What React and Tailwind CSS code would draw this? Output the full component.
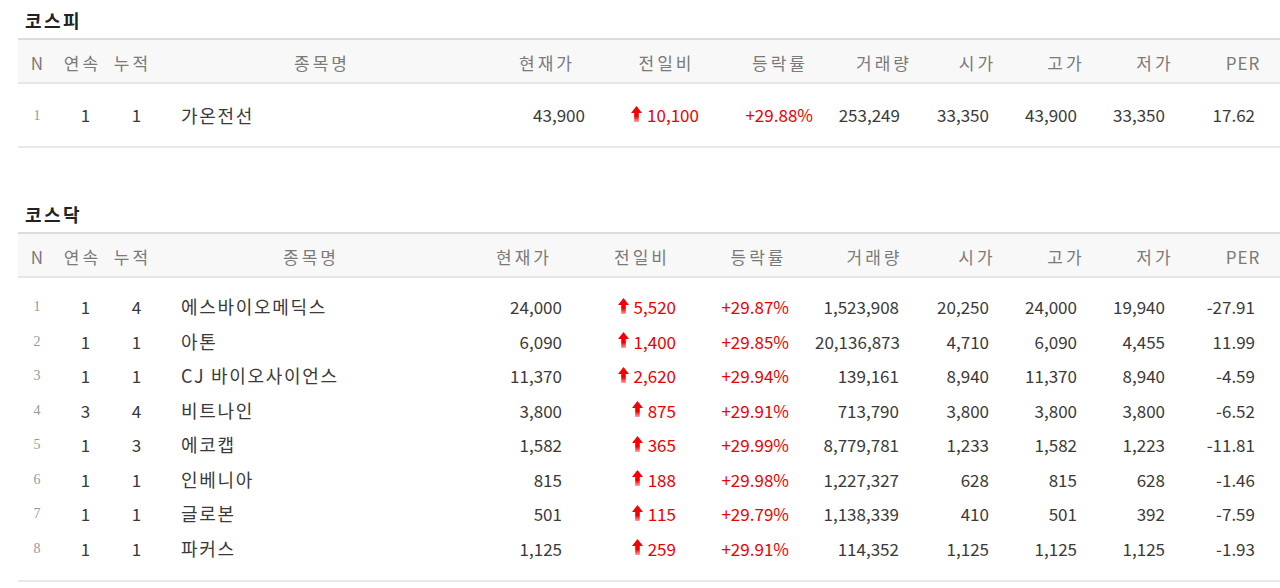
import { useId } from 'react'

const kospiCols = 'grid-cols-[38px_50px_50px_329px_121px_118px_109px_99px_88px_89px_89px_89px]'
const kosdaqCols = 'grid-cols-[38px_50px_50px_307px_119px_117px_116px_116px_89px_89px_89px_89px]'

const headers = ['N', '연속', '누적', '종목명', '현재가', '전일비', '등락률', '거래량', '시가', '고가', '저가', 'PER']

const kospi = [
  ['1', '1', '1', '가온전선', '43,900', '10,100', '+29.88%', '253,249', '33,350', '43,900', '33,350', '17.62'],
]

const kosdaq = [
  ['1', '1', '4', '에스바이오메딕스', '24,000', '5,520', '+29.87%', '1,523,908', '20,250', '24,000', '19,940', '-27.91'],
  ['2', '1', '1', '아톤', '6,090', '1,400', '+29.85%', '20,136,873', '4,710', '6,090', '4,455', '11.99'],
  ['3', '1', '1', 'CJ 바이오사이언스', '11,370', '2,620', '+29.94%', '139,161', '8,940', '11,370', '8,940', '-4.59'],
  ['4', '3', '4', '비트나인', '3,800', '875', '+29.91%', '713,790', '3,800', '3,800', '3,800', '-6.52'],
  ['5', '1', '3', '에코캡', '1,582', '365', '+29.99%', '8,779,781', '1,233', '1,582', '1,223', '-11.81'],
  ['6', '1', '1', '인베니아', '815', '188', '+29.98%', '1,227,327', '628', '815', '628', '-1.46'],
  ['7', '1', '1', '글로본', '501', '115', '+29.79%', '1,138,339', '410', '501', '392', '-7.59'],
  ['8', '1', '1', '파커스', '1,125', '259', '+29.91%', '114,352', '1,125', '1,125', '1,125', '-1.93'],
]

const UpArrow = () => {
  const id = useId()
  return (
    <svg width="11" height="16" viewBox="0 0 11 16" className="mr-[5px] shrink-0 -mt-[2px]">
      <defs>
        <linearGradient id={id} x1="0" y1="0" x2="0" y2="1">
          <stop offset="0" stopColor="#ff0000" />
          <stop offset="0.65" stopColor="#f00000" />
          <stop offset="1" stopColor="#ffa0a0" />
        </linearGradient>
      </defs>
      <path d="M5.5 0 L11 7 L7.8 7 L7.8 16 L3.2 16 L3.2 7 L0 7 Z" fill={`url(#${id})`} />
    </svg>
  )
}

const StockTable = ({ title, rows, cols, pads, rowH, body }) => (
  <section>
    <h3 className="h-[38px] pl-[7px] pt-[9px] text-[18px] font-bold text-[#222] leading-[22px] tracking-[2.5px]">{title}</h3>
    <div className={`grid ${cols} bg-[#f8f8f8] border-t-2 border-b-2 border-t-[#dcdcdc] border-b-[#e6e6e6] h-[46px] items-center text-[17px] text-[#7a7a7a] tracking-[3px]`}>
      {headers.map(h => (
        <div key={h} className={h === 'PER' ? 'text-center pt-[3px] pl-[1px] tracking-[1px]' : 'text-center pt-[3px] pl-[3px]'}>
          {h}
        </div>
      ))}
    </div>
    <div className={`${body} border-b-2 border-[#e8e8e8]`}>
      {rows.map(r => (
        <div key={r[0] + r[3]} className={`grid ${cols} ${rowH} items-center text-[17px] text-[#3a3a3a]`}>
          <div className="text-center text-[14px] text-[#999] font-['Liberation_Serif',serif]">{r[0]}</div>
          <div className="text-center pl-[9px]">{r[1]}</div>
          <div className="text-center pl-[11px]">{r[2]}</div>
          <div className="pl-[25px] text-[18px] tracking-[1.7px]">{r[3]}</div>
          <div className={`text-right ${pads[0]}`}>{r[4]}</div>
          <div className={`flex items-center justify-end text-[#ee0000] ${pads[1]}`}>
            <UpArrow />
            {r[5]}
          </div>
          <div className={`text-right text-[#ee0000] ${pads[2]}`}>{r[6]}</div>
          <div className="text-right pr-[32px]">{r[7]}</div>
          <div className="text-right pr-[31px]">{r[8]}</div>
          <div className="text-right pr-[32px]">{r[9]}</div>
          <div className="text-right pr-[33px]">{r[10]}</div>
          <div className="text-right pr-[32px]">{r[11]}</div>
        </div>
      ))}
    </div>
  </section>
)

export default function App() {
  return (
    <div className="w-[1280px] h-[588px] overflow-hidden bg-white font-['Noto_Sans_CJK_KR','Noto_Sans',sans-serif]">
      <div className="ml-[18px] w-[1269px]">
        <StockTable
          title="코스피"
          rows={kospi}
          cols={kospiCols}
          pads={['pr-[21px]', 'pr-[25px]', 'pr-[20px]']}
          rowH="h-[36px]"
          body="py-[13px]"
        />
        <div className="mt-[46px]">
          <StockTable
            title="코스닥"
            rows={kosdaq}
            cols={kosdaqCols}
            pads={['pr-[20px]', 'pr-[23px]', 'pr-[26px]']}
            rowH="h-[34.5px]"
            body="pt-[11.5px] pb-[14.5px]"
          />
        </div>
      </div>
    </div>
  )
}
